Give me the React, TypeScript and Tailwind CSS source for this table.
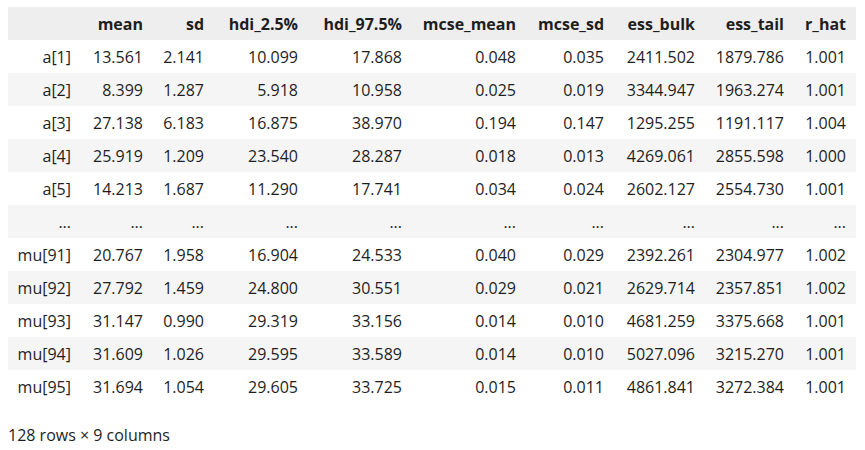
const columns = ["mean", "sd", "hdi_2.5%", "hdi_97.5%", "mcse_mean", "mcse_sd", "ess_bulk", "ess_tail", "r_hat"];

// column widths in px, index column first
const widths = [73, 72, 61, 94, 104, 114, 88, 91, 89, 62];

const rows: [string, string[]][] = [
  ["a[1]", ["13.561", "2.141", "10.099", "17.868", "0.048", "0.035", "2411.502", "1879.786", "1.001"]],
  ["a[2]", ["8.399", "1.287", "5.918", "10.958", "0.025", "0.019", "3344.947", "1963.274", "1.001"]],
  ["a[3]", ["27.138", "6.183", "16.875", "38.970", "0.194", "0.147", "1295.255", "1191.117", "1.004"]],
  ["a[4]", ["25.919", "1.209", "23.540", "28.287", "0.018", "0.013", "4269.061", "2855.598", "1.000"]],
  ["a[5]", ["14.213", "1.687", "11.290", "17.741", "0.034", "0.024", "2602.127", "2554.730", "1.001"]],
  ["...", ["...", "...", "...", "...", "...", "...", "...", "...", "..."]],
  ["mu[91]", ["20.767", "1.958", "16.904", "24.533", "0.040", "0.029", "2392.261", "2304.977", "1.002"]],
  ["mu[92]", ["27.792", "1.459", "24.800", "30.551", "0.029", "0.021", "2629.714", "2357.851", "1.002"]],
  ["mu[93]", ["31.147", "0.990", "29.319", "33.156", "0.014", "0.010", "4681.259", "3375.668", "1.001"]],
  ["mu[94]", ["31.609", "1.026", "29.595", "33.589", "0.014", "0.010", "5027.096", "3215.270", "1.001"]],
  ["mu[95]", ["31.694", "1.054", "29.605", "33.725", "0.015", "0.011", "4861.841", "3272.384", "1.001"]],
];

export default function App() {
  return (
    <div className="min-h-[450px] bg-white pt-[7px] px-[8px] text-[16px] text-[#1e1e1e] font-['Segoe_UI','Open_Sans','Noto_Sans',sans-serif]">
      <table className="table-fixed border-collapse w-[848px]">
        <colgroup>
          {widths.map((w, i) => (
            <col key={i} style={{ width: w }} />
          ))}
        </colgroup>
        <thead>
          <tr className="h-[33px] bg-[#eeeeee]">
            <th className="pr-[10px]"></th>
            {columns.map((c) => (
              <th key={c} className="pr-[10px] text-right font-bold whitespace-nowrap">
                {c}
              </th>
            ))}
          </tr>
        </thead>
        <tbody>
          {rows.map(([idx, vals], i) => (
            <tr key={idx + i} className={`h-[33px] ${i % 2 === 1 ? "bg-[#f5f5f5]" : "bg-white"}`}>
              <th className="pr-[10px] text-right font-normal whitespace-nowrap">{idx}</th>
              {vals.map((v, j) => (
                <td key={j} className="pr-[10px] text-right whitespace-nowrap">
                  {v}
                </td>
              ))}
            </tr>
          ))}
        </tbody>
      </table>
      <p className="mt-[20px] leading-[24px]">128 rows × 9 columns</p>
    </div>
  );
}
